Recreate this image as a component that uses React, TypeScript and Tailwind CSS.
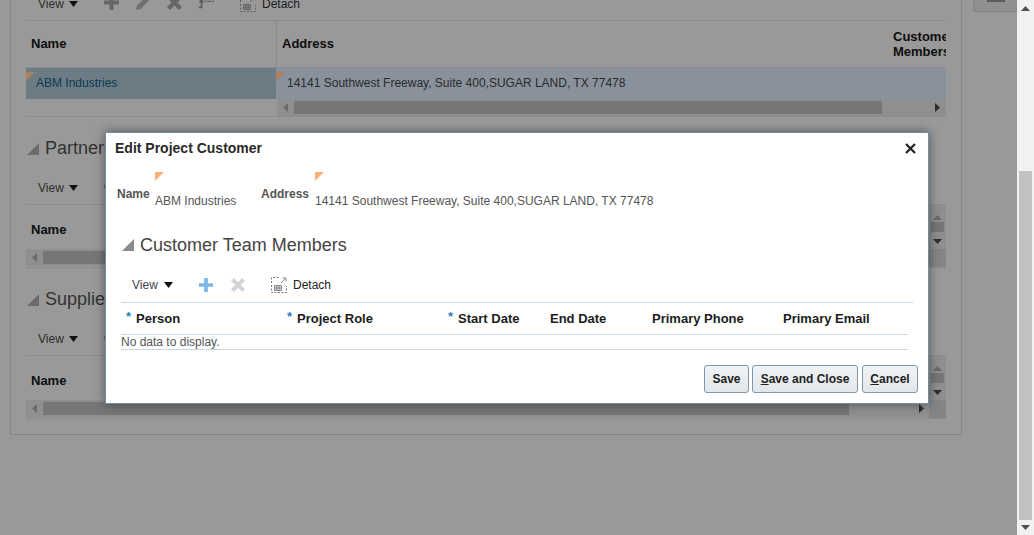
import type { ReactNode } from "react";

function Caret({ className }: { className: string }) {
  return (
    <svg width="9" height="6" viewBox="0 0 9 6" className={className}>
      <path d="M0 0h9L4.500 6z" fill="currentColor" />
    </svg>
  );
}

function PlusIcon({ className }: { className: string }) {
  return (
    <svg viewBox="0 0 15 15" className={className}>
      <path d="M5.500 0h4v5.500H15v4H9.500V15h-4V9.500H0v-4h5.500z" fill="currentColor" />
    </svg>
  );
}

function CrossIcon({ className }: { className: string }) {
  return (
    <svg viewBox="0 0 15 15" className={className}>
      <path d="M3 0l4.500 4.500L12 0l3 3-4.500 4.500L15 12l-3 3-4.500-4.500L3 15l-3-3 4.500-4.500L0 3z" fill="currentColor" />
    </svg>
  );
}

function PencilIcon() {
  return (
    <svg width="16" height="16" viewBox="0 0 16 16" className="text-[#707070]">
      <path d="M1 15l1-4.500L11.500 1 15 4.500 5.500 14z" fill="currentColor" />
    </svg>
  );
}

function FreezeIcon() {
  return (
    <svg width="16" height="16" viewBox="0 0 16 16" fill="none" className="text-[#5e5e5e]">
      <path d="M7.500 0.500h8v6h-8zM11.500 0.500v6M7.500 3.500h8" stroke="currentColor" strokeWidth="0.800" />
      <path d="M0.500 12.500h3V6M1.500 7.500l2-2.500 2 2.500" stroke="currentColor" strokeWidth="1.700" />
    </svg>
  );
}

function DetachIcon({ tone }: { tone: string }) {
  return (
    <svg width="16" height="16" viewBox="0 0 16 16" fill="none" className={tone}>
      <path d="M0.500 8v7.500H15.500V9M0.500 6V0.500H8" stroke="currentColor" strokeDasharray="2 1.500" />
      <path d="M3.500 8.500h7v5h-7zM3.500 10.200h7M3.500 11.800h7M5.800 8.500v5M8.200 8.500v5" stroke="currentColor" strokeWidth="0.800" />
      <path d="M10 6l5-5M11.500 1H15v3.500" stroke="currentColor" strokeWidth="0.800" />
    </svg>
  );
}

function Arrow({ dir, tone }: { dir: "up" | "down" | "left" | "right"; tone: string }) {
  const d = {
    up: "M0 6h9L4.500 1z",
    down: "M0 1h9L4.500 6z",
    left: "M6 0v9L1 4.500z",
    right: "M1 0v9l5-4.500z",
  }[dir];
  const size = dir === "up" || dir === "down" ? "w-[9px] h-[7px]" : "w-[7px] h-[9px]";
  const box = dir === "up" || dir === "down" ? "0 0 9 7" : "0 0 7 9";
  return (
    <svg viewBox={box} className={`${size} ${tone}`}>
      <path d={d} fill="currentColor" />
    </svg>
  );
}

function HScroll({ thumb, end }: { thumb: string; end: string }) {
  return (
    <div className="flex h-[17px] items-center bg-[#8f8f8f]">
      <div className="flex w-[17px] shrink-0 justify-center">
        <Arrow dir="left" tone="text-[#6a6a6a]" />
      </div>
      <div className={`h-[13px] ${thumb} bg-[#767676]`} />
      <div className="flex-1" />
      <div className={`flex ${end} shrink-0 justify-center`}>
        <Arrow dir="right" tone="text-[#2e2e2e]" />
      </div>
    </div>
  );
}

function VScroll() {
  return (
    <div className="flex w-[17px] shrink-0 flex-col items-center bg-[#8f8f8f]">
      <div className="flex h-[17px] items-end justify-center pb-[1px]">
        <Arrow dir="up" tone="text-[#6a6a6a]" />
      </div>
      <div className="h-[10px] w-[13px] bg-[#767676]" />
      <div className="flex h-[17px] items-center justify-center pt-[2px]">
        <Arrow dir="down" tone="text-[#2e2e2e]" />
      </div>
      <div className="mt-auto h-[18px] w-full bg-[#858585]" />
    </div>
  );
}

function PageToolbar({ className }: { className: string }) {
  return (
    <div className={`flex items-center border-b border-[#868e95] pl-[12px] ${className}`}>
      <span className="w-[31px] text-[12px] text-[#2c2c2c]">View</span>
      <Caret className="text-[#111]" />
      <div className="ml-[26px] flex -translate-y-[1px] items-center gap-[16px]">
        <PlusIcon className="h-[15px] w-[15px] text-[#666]" />
        <PencilIcon />
        <CrossIcon className="h-[15px] w-[15px] text-[#666]" />
        <FreezeIcon />
      </div>
      <div className="ml-[26px] flex items-center gap-[6px]">
        <DetachIcon tone="text-[#5c5c5c]" />
        <span className="text-[12px] text-[#1c1c1c]">Detach</span>
      </div>
    </div>
  );
}

function SectionHeading({ title }: { title: string }) {
  return (
    <div className="flex h-[26px] items-center pl-[1px] pt-[1px]">
      <svg width="12" height="12" viewBox="0 0 12 12" className="mr-[6px] text-[#6a6a6a]">
        <path d="M12 0v12H0z" fill="currentColor" />
      </svg>
      <span className="text-[18px] text-[#333]">{title}</span>
    </div>
  );
}

function EmptyTable({ title }: { title: string }) {
  return (
    <section>
      <div className="h-[18px]" />
      <SectionHeading title={title} />
      <PageToolbar className="h-[44px] pt-[10px]" />
      <div className="flex border-b border-[#868e95]">
        <div className="min-w-0 flex-1">
          <div className="flex h-[44px] items-center pl-[5px] pt-[5px] text-[13px] font-bold text-[#0e0e0e]">Name</div>
          <HScroll thumb="w-[806px]" end="w-[17px] mr-[-1px]" />
        </div>
        <VScroll />
      </div>
    </section>
  );
}

function Corner({ tone }: { tone: string }) {
  return (
    <svg width="9" height="9" viewBox="0 0 9 9" className={tone}>
      <path d="M0 0h9L0 9z" fill="currentColor" />
    </svg>
  );
}

function HeaderCell({ width, required, children }: { width: string; required?: boolean; children: ReactNode }) {
  return (
    <div className={`flex ${width} items-center pl-[5px] text-[13px] font-bold text-[#1c1c1c]`}>
      {required && <span className="mr-[5px] -translate-y-[2px] text-[13px] font-bold leading-none text-[#2f7fc1]">*</span>}
      {children}
    </div>
  );
}

function DialogButton({ children, width }: { children: ReactNode; width: string }) {
  return (
    <button className={`h-[28px] ${width} rounded-[3px] border border-[#7f98ac] bg-gradient-to-b from-[#f1f4f6] to-[#e3e7ea] text-[12px] font-bold text-[#222]`}>
      {children}
    </button>
  );
}

function Dialog() {
  return (
    <div className="absolute left-[105px] top-[132px] flex h-[272px] w-[824px] flex-col border border-[#6f8ea8] bg-white shadow-[0_0_10px_rgba(0,0,0,0.45)]">
      <div className="flex h-[29px] items-center justify-between pl-[9px] pr-[12px] pt-[2px]">
        <span className="text-[14px] font-bold text-[#2a2a2a]">Edit Project Customer</span>
        <svg width="11" height="11" viewBox="0 0 11 11" className="text-[#222]">
          <path d="M1 1l9 9M10 1l-9 9" stroke="currentColor" strokeWidth="2.200" />
        </svg>
      </div>

      <div className="ml-[11px] mt-[10px] flex h-[38px] text-[12px] text-[#555]">
        <span className="mt-[13px] w-[38px] font-bold">Name</span>
        <div className="w-[106px]">
          <Corner tone="text-[#fbb07c]" />
          <div className="mt-[11px]">ABM Industries</div>
        </div>
        <span className="mt-[13px] w-[54px] font-bold">Address</span>
        <div>
          <Corner tone="text-[#fbb07c]" />
          <div className="mt-[11px]">14141 Southwest Freeway, Suite 400,SUGAR LAND, TX 77478</div>
        </div>
      </div>

      <div className="ml-[16px] mt-[22px] flex h-[26px] items-center">
        <svg width="12" height="12" viewBox="0 0 12 12" className="mr-[6px] text-[#8a8a8a]">
          <path d="M12 0v12H0z" fill="currentColor" />
        </svg>
        <span className="text-[18px] text-[#444]">Customer Team Members</span>
      </div>

      <div className="ml-[15px] w-[792px]">
        <div className="flex h-[45px] items-center border-b border-[#c9d7e3] pl-[11px] pt-[10px]">
          <span className="w-[32px] text-[12px] text-[#444]">View</span>
          <Caret className="text-[#111]" />
          <PlusIcon className="ml-[26px] h-[14px] w-[14px] text-[#7db8e8]" />
          <CrossIcon className="ml-[18px] h-[14px] w-[14px] text-[#d4d4d4]" />
          <div className="ml-[26px] flex items-center gap-[6px]">
            <DetachIcon tone="text-[#777]" />
            <span className="text-[12px] text-[#222]">Detach</span>
          </div>
        </div>
        <div className="flex h-[32px] w-[787px] border-b border-[#c9d7e3]">
          <HeaderCell width="w-[161px]" required>Person</HeaderCell>
          <HeaderCell width="w-[161px]" required>Project Role</HeaderCell>
          <HeaderCell width="w-[102px]" required>Start Date</HeaderCell>
          <HeaderCell width="w-[102px]">End Date</HeaderCell>
          <HeaderCell width="w-[131px]">Primary Phone</HeaderCell>
          <HeaderCell width="w-[130px]">Primary Email</HeaderCell>
        </div>
        <div className="flex h-[15px] w-[787px] items-center border-b border-[#c9d7e3] text-[12px] text-[#555]">No data to display.</div>
      </div>

      <div className="mr-[10px] mt-[15px] flex justify-end gap-[3px]">
        <DialogButton width="w-[45px]">Save</DialogButton>
        <DialogButton width="w-[106px]"><span className="underline">S</span>ave and Close</DialogButton>
        <div className="ml-[1px] flex">
          <DialogButton width="w-[56px]"><span className="underline">C</span>ancel</DialogButton>
        </div>
      </div>
    </div>
  );
}

export default function App() {
  return (
    <div className="relative flex h-[535px] w-[1034px] overflow-hidden bg-[#999999] font-['Liberation_Sans',Arial,sans-serif]">
      <main className="flex min-w-0 flex-1 items-start pl-[10px]">
        <div className="-mt-[13px] h-[448px] w-[952px] shrink-0 border border-t-0 border-[#868686] px-[15px]">
          <PageToolbar className="h-[34px]" />

          <div className="flex h-[47px] border-b border-[#868e95] text-[13px] font-bold text-[#0e0e0e]">
            <div className="flex w-[250px] items-center pl-[5px]">Name</div>
            <div className="w-[617px] border-l border-[#868e95] pl-[5px] pt-[13px]">Address</div>
            <div className="min-w-0 flex-1 overflow-hidden whitespace-nowrap pt-[8px] leading-[15px]">
              Customer Team
              <br />
              Members
            </div>
          </div>
          <div className="flex h-[31px] text-[12px]">
            <div className="relative flex w-[250px] items-center bg-[#6d7b85] pb-[1px] pl-[10px] text-[#093a52]">
              <div className="absolute left-0 top-[4px] flex"><Corner tone="text-[#b07f5c]" /></div>
              ABM Industries
            </div>
            <div className="relative flex flex-1 items-center bg-[#89929a] pb-[1px] pl-[11px] text-[#2a2a30]">
              <div className="absolute left-0 top-[4px] flex"><Corner tone="text-[#b07f5c]" /></div>
              14141 Southwest Freeway, Suite 400,SUGAR LAND, TX 77478
            </div>
          </div>
          <div className="border-b border-[#868e95]">
            <div className="ml-[251px]">
              <HScroll thumb="w-[588px]" end="w-[17px]" />
            </div>
          </div>

          <EmptyTable title="Partners" />
          <EmptyTable title="Suppliers" />
        </div>

        <div className="ml-[11px] flex h-[12px] w-[44px] justify-center border border-t-0 border-r-0 border-[#868686] bg-[#8f8f8f]">
          <div className="h-[2px] w-[18px] bg-[#5c5c5c]" />
        </div>
      </main>

      <aside className="flex w-[17px] shrink-0 flex-col items-center bg-[#f1f1f1]">
        <div className="flex h-[17px] items-center justify-center">
          <Arrow dir="up" tone="text-[#505050]" />
        </div>
        <div className="mt-[154px] h-[349px] w-[13px] bg-[#c1c1c1]" />
        <div className="flex h-[15px] flex-1 items-center justify-center">
          <Arrow dir="down" tone="text-[#505050]" />
        </div>
      </aside>

      <Dialog />
    </div>
  );
}
